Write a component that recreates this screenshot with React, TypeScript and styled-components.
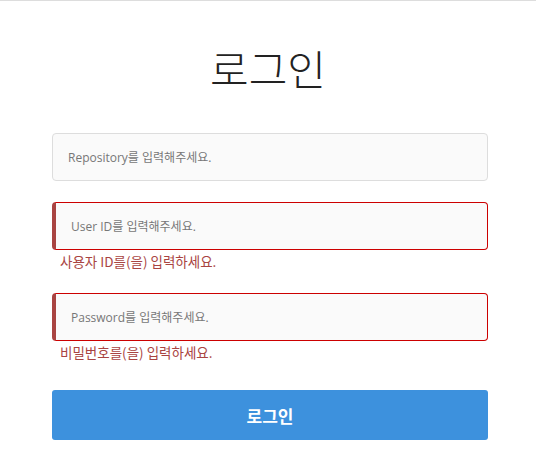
import React, { useState } from "react";
import styled, { createGlobalStyle } from "styled-components";

const GlobalStyle = createGlobalStyle`
  html, body {
    margin: 0;
    padding: 0;
    background: #fff;
  }
  body {
    font-family: "Open Sans", "Noto Sans CJK KR", sans-serif;
  }
`;

const Page = styled.div`
  border-top: 1px solid #dddddd;
  min-height: 469px;
  padding-top: 40px;
  box-sizing: border-box;
`;

const Title = styled.h1`
  margin: 0 0 38px;
  text-align: center;
  font-family: "Noto Sans CJK KR", sans-serif;
  font-size: 42px;
  font-weight: 300;
  line-height: 54px;
  color: #222;
`;

const Form = styled.form`
  width: 436px;
  margin-left: 52px;
  display: flex;
  flex-direction: column;
`;

const Field = styled.div`
  margin-bottom: 21px;
`;

const Input = styled.input<{ $invalid?: boolean }>`
  display: block;
  width: 100%;
  height: 48px;
  box-sizing: border-box;
  padding: 0 15px;
  font-family: "Open Sans", "Noto Sans CJK KR", sans-serif;
  font-size: 12px;
  color: #333;
  background: #fafafa;
  border: 1px solid ${({ $invalid }) => ($invalid ? "#cc0000" : "#dddddd")};
  border-left: ${({ $invalid }) =>
    $invalid ? "4px solid #a94442" : "1px solid #dddddd"};
  border-radius: 4px;
  outline: none;

  &::placeholder {
    color: #777;
  }
`;

const ErrorText = styled.p`
  margin: 0;
  padding-left: 8px;
  font-family: "Noto Sans CJK KR", sans-serif;
  font-size: 13.5px;
  line-height: 22px;
  color: #a94442;
`;

const SubmitButton = styled.button`
  margin-top: 6px;
  height: 50px;
  border: none;
  border-radius: 3px;
  background: #3d91dd;
  color: #fff;
  font-family: "Noto Sans CJK KR", sans-serif;
  font-size: 17px;
  font-weight: 700;
  cursor: pointer;
`;

function App() {
  const [form, setForm] = useState({ repository: "", userId: "", password: "" });

  const update = (key: keyof typeof form) => (e: React.ChangeEvent<HTMLInputElement>) =>
    setForm((prev) => ({ ...prev, [key]: e.target.value }));

  return (
    <>
      <GlobalStyle />
      <Page>
        <Title>로그인</Title>
        <Form onSubmit={(e) => e.preventDefault()}>
          <Field>
            <Input
              value={form.repository}
              onChange={update("repository")}
              placeholder="Repository를 입력해주세요."
            />
          </Field>
          <Field>
            <Input
              $invalid
              value={form.userId}
              onChange={update("userId")}
              placeholder="User ID를 입력해주세요."
            />
            <ErrorText>사용자 ID를(을) 입력하세요.</ErrorText>
          </Field>
          <Field>
            <Input
              $invalid
              type="password"
              value={form.password}
              onChange={update("password")}
              placeholder="Password를 입력해주세요."
            />
            <ErrorText>비밀번호를(을) 입력하세요.</ErrorText>
          </Field>
          <SubmitButton type="submit">로그인</SubmitButton>
        </Form>
      </Page>
    </>
  );
}

export default App;
